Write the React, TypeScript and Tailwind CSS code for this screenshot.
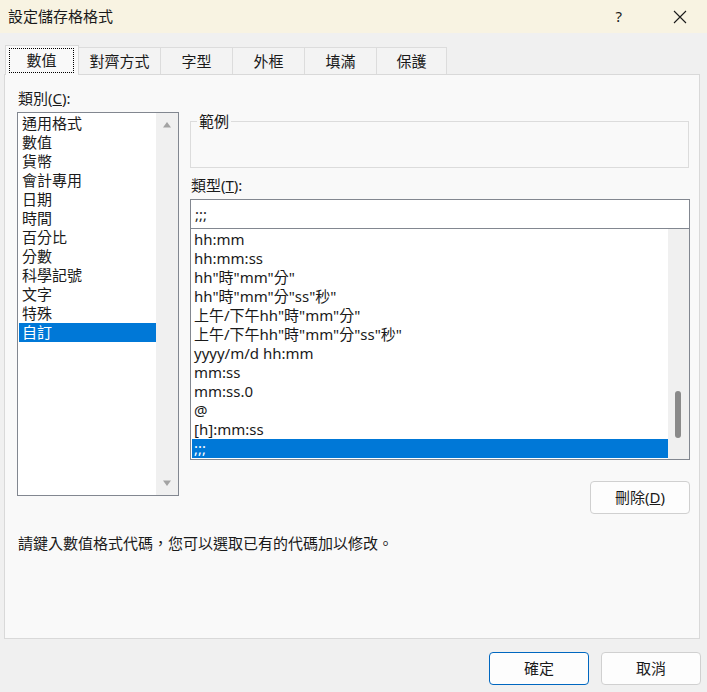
import React from 'react'

const categories = ['通用格式', '數值', '貨幣', '會計專用', '日期', '時間', '百分比', '分數', '科學記號', '文字', '特殊', '自訂']

const formats = [
  'hh:mm',
  'hh:mm:ss',
  'hh"時"mm"分"',
  'hh"時"mm"分"ss"秒"',
  '上午/下午hh"時"mm"分"',
  '上午/下午hh"時"mm"分"ss"秒"',
  'yyyy/m/d hh:mm',
  'mm:ss',
  'mm:ss.0',
  '@',
  '[h]:mm:ss',
  ';;;',
]

const tabs = ['數值', '對齊方式', '字型', '外框', '填滿', '保護']

const font = 'font-["Noto_Sans","Noto_Sans_CJK_TC",sans-serif]'

function Tabs() {
  return (
    <div className="flex h-[41px] items-end pl-[5px]">
      {tabs.map((t, i) =>
        i === 0 ? (
          <div
            key={t}
            className="relative z-10 -mb-px flex h-[30px] w-[74px] border border-b-0 border-[#d9d9d9] bg-[#f9f9f9] pb-[2px] pl-[3px] pr-[4px] pt-[2px]"
          >
            <div className="flex flex-1 items-center justify-center border border-dotted border-black">{t}</div>
          </div>
        ) : (
          <div
            key={t}
            className={`flex h-[27px] items-center justify-center border-r border-t border-[#dcdcdc] bg-[#f3f3f3] ${
              i === 1 ? 'w-[82px]' : i === 5 ? 'w-[70px]' : 'w-[72px]'
            }`}
          >
            {t}
          </div>
        ),
      )}
    </div>
  )
}

function Triangle({ up }: { up?: boolean }) {
  return (
    <svg width="10" height="7" viewBox="0 0 10 7">
      <path d={up ? 'M1 6.5 L5 1 L9 6.5 Z' : 'M1 0.5 L9 0.5 L5 6 Z'} fill="#a3a3a3" />
    </svg>
  )
}

function CategoryList() {
  return (
    <div className="flex h-[384px] w-[162px] border border-[#828790] bg-white">
      <div className="flex-1 pl-[1px] pt-[1px]">
        {categories.map((c, i) => (
          <div
            key={c}
            className={`h-[19px] pl-[3px] leading-[19px] ${i === 11 ? 'bg-[#0078d7] text-white' : ''}`}
          >
            {c}
          </div>
        ))}
      </div>
      <div className="flex w-[22px] flex-col items-center justify-between bg-[#f0f0f0] pb-[8px] pt-[8px]">
        <Triangle up />
        <Triangle />
      </div>
    </div>
  )
}

function FormatList() {
  return (
    <div className="flex h-[231px] w-[500px] border border-t-0 border-[#828790] bg-white">
      <div className="flex-1 pl-[1px] pt-[1px]">
        {formats.map((f, i) => (
          <div
            key={f}
            className={`h-[19px] whitespace-nowrap pl-[2px] leading-[19px] ${i === 11 ? 'bg-[#0078d7] text-white' : ''}`}
          >
            {f}
          </div>
        ))}
      </div>
      <div className="flex w-[21px] flex-col bg-[#f0f0f0] py-[1px] pl-[7px]">
        <div className="mt-[161px] h-[47px] w-[6px] rounded-full bg-[#8a8a8a]" />
      </div>
    </div>
  )
}

export default function App() {
  return (
    <div className={`flex h-[692px] w-[707px] flex-col bg-[#f0f0f0] text-[15px] text-[#1a1a1a] ${font}`}>
      <div className="flex h-[33px] items-center bg-[#f8f3e2] pl-[8px]">
        <span className="flex-1">設定儲存格格式</span>
        <span className="mr-[51px] text-[15px]">?</span>
        <svg width="14" height="14" viewBox="0 0 14 14" className="mr-[20px]">
          <path d="M1 1 L13 13 M13 1 L1 13" stroke="#1a1a1a" strokeWidth="1.1" />
        </svg>
      </div>

      <Tabs />

      <div className="ml-[4px] flex h-[565px] w-[696px] flex-col border border-[#d9d9d9] bg-[#f9f9f9] pl-[12px] pt-[13px]">
        <div className="flex items-start gap-[11px]">
          <div className="flex flex-col">
            <div className="h-[20px] pl-[1px] leading-[20px]">
              類別(<span className="underline">C</span>):
            </div>
            <div className="mt-[4px]">
              <CategoryList />
            </div>
          </div>

          <div className="mt-[23px] flex flex-col">
            <fieldset className="w-[499px] border border-[#dcdcdc]">
              <legend className="ml-[6px] px-[2px] leading-[20px]">範例</legend>
              <div className="h-[36px]" />
            </fieldset>
            <div className="mt-[7px] h-[20px] pl-[1px] leading-[20px]">
              類型(<span className="underline">T</span>):
            </div>
            <div className="mt-[4px] flex h-[30px] w-[500px] items-center border border-[#828790] bg-white pl-[4px]">
              ;;;
            </div>
            <FormatList />
            <div className="mt-[21px] flex justify-end">
              <button
                type="button"
                className="flex h-[33px] w-[100px] items-center justify-center rounded-[4px] border border-[#d0d0d0] bg-[#fdfdfd]"
              >
                刪除(<span className="underline">D</span>)
              </button>
            </div>
          </div>
        </div>

        <div className="mt-[19px] h-[20px] pl-[1px] leading-[20px]">請鍵入數值格式代碼，您可以選取已有的代碼加以修改。</div>
      </div>

      <div className="flex justify-end gap-[12px] pr-[6px] pt-[13px]">
        <button
          type="button"
          className="flex h-[33px] w-[100px] items-center justify-center rounded-[4px] border border-[#0067c0] bg-[#fdfdfd]"
        >
          確定
        </button>
        <button
          type="button"
          className="flex h-[33px] w-[100px] items-center justify-center rounded-[4px] border border-[#d0d0d0] bg-[#fdfdfd]"
        >
          取消
        </button>
      </div>
    </div>
  )
}
